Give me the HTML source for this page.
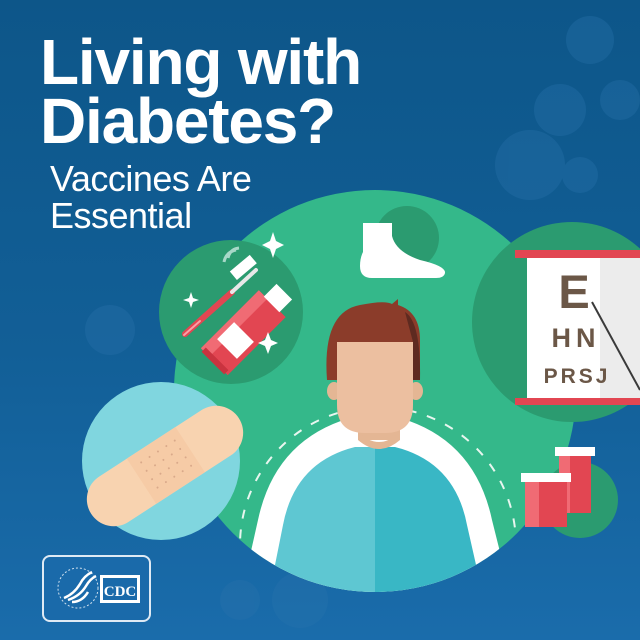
<!DOCTYPE html>
<html><head><meta charset="utf-8"><style>
html,body{margin:0;padding:0;width:640px;height:640px;overflow:hidden;}
body{position:relative;background:linear-gradient(180deg,#0d5689 0%,#125f97 55%,#1a6cab 100%);font-family:"Liberation Sans",sans-serif;}
.t1{position:absolute;left:40px;top:33px;color:#fff;font-weight:bold;font-size:64px;line-height:59px;letter-spacing:-1.2px;white-space:nowrap;}
.t2{position:absolute;left:50px;top:160px;color:#fff;font-size:36px;line-height:37px;letter-spacing:-0.5px;white-space:nowrap;}
svg{position:absolute;left:0;top:0;display:block;}
</style></head><body>
<svg width="640" height="640" viewBox="0 0 640 640">
  <g fill="#2a74ad" opacity="0.35">
    <circle cx="590" cy="40" r="24"/><circle cx="560" cy="110" r="26"/><circle cx="530" cy="165" r="35"/>
    <circle cx="620" cy="100" r="20"/><circle cx="580" cy="175" r="18"/>
    <circle cx="110" cy="330" r="25"/><circle cx="300" cy="600" r="28"/><circle cx="240" cy="600" r="20"/>
  </g>
  <circle cx="375" cy="391" r="201" fill="#34b88a"/>
  <!-- foot -->
  <circle cx="407" cy="238" r="32" fill="#2b9b70"/>
  <path d="M363 223 H392 V236 Q396 252 420 260 Q446 266 445 273 Q444 278 436 278 H372 Q360 278 360 266 Q360 258 363 252 Z" fill="#fff"/>
  <!-- toothpaste circle -->
  <circle cx="231" cy="312" r="72" fill="#2b9b70"/>
  <path d="M185 334 L232 292" stroke="#e24652" stroke-width="6" stroke-linecap="round"/>
  <path d="M184 335 L200 321" stroke="#f8a0a6" stroke-width="2" stroke-linecap="round"/>
  <path d="M232 292 L256 270" stroke="#e8e8e8" stroke-width="4" stroke-linecap="round"/>
  <rect x="230" y="262" width="26" height="11" fill="#fff" transform="rotate(-40 243 267)"/>
  <path d="M224 262 q2-10 12-12 M228 258 q2-9 11-10" stroke="#a7d8c8" stroke-width="3" fill="none"/>
  <g transform="rotate(45 244 332)">
    <rect x="225" y="292" width="38" height="82" fill="#e24652"/>
    <rect x="225" y="292" width="12" height="82" fill="#f06b74"/>
    <rect x="228" y="370" width="32" height="6" fill="#c9333f"/>
    <rect x="233" y="275" width="22" height="18" fill="#fff"/>
    <rect x="230" y="332" width="28" height="24" fill="#fff"/>
  </g>
  <path d="M273 232 l3 9 8 4 -8 4 -3 9 -3-9 -8-4 8-4z" fill="#fff"/>
  <path d="M191 292 l2 6 6 2 -6 2 -2 6 -2-6 -6-2 6-2z" fill="#fff"/>
  <path d="M268 332 l3 8 7 3 -7 3 -3 8 -3-8 -7-3 7-3z" fill="#fff"/>
  <!-- bandaid -->
  <circle cx="161" cy="461" r="79" fill="#80d6df"/>
  <g transform="rotate(-33 165 466)">
    <rect x="77" y="439" width="176" height="54" rx="27" fill="#f8d3b0"/>
    <rect x="137" y="439" width="58" height="54" fill="#f6cba6"/>
    <g fill="#d9a98a">
      <circle cx="147" cy="450" r="1"/><circle cx="157" cy="450" r="1"/><circle cx="167" cy="450" r="1"/><circle cx="177" cy="450" r="1"/><circle cx="187" cy="450" r="1"/>
      <circle cx="147" cy="460" r="1"/><circle cx="157" cy="460" r="1"/><circle cx="167" cy="460" r="1"/><circle cx="177" cy="460" r="1"/><circle cx="187" cy="460" r="1"/>
      <circle cx="147" cy="470" r="1"/><circle cx="157" cy="470" r="1"/><circle cx="167" cy="470" r="1"/><circle cx="177" cy="470" r="1"/><circle cx="187" cy="470" r="1"/>
      <circle cx="147" cy="480" r="1"/><circle cx="157" cy="480" r="1"/><circle cx="167" cy="480" r="1"/><circle cx="177" cy="480" r="1"/><circle cx="187" cy="480" r="1"/>
    </g>
  </g>
  <!-- eye chart -->
  <circle cx="572" cy="322" r="100" fill="#2b9b70"/>
  <rect x="527" y="258" width="113" height="140" fill="#fff"/>
  <rect x="600" y="258" width="40" height="140" fill="#ececec"/>
  <rect x="515" y="250" width="125" height="8" fill="#e24652"/>
  <rect x="515" y="398" width="125" height="7" fill="#e24652"/>
  <text x="574" y="308" font-family="Liberation Sans" font-weight="bold" font-size="47" fill="#6b5747" text-anchor="middle">E</text>
  <text x="576" y="347" font-family="Liberation Sans" font-weight="bold" font-size="27" fill="#6b5747" text-anchor="middle" letter-spacing="5">HN</text>
  <text x="577" y="383" font-family="Liberation Sans" font-weight="bold" font-size="21" fill="#6b5747" text-anchor="middle" letter-spacing="3">PRSJ</text>
  <path d="M592 302 L640 390" stroke="#3a3a3a" stroke-width="2"/>
  <!-- pills -->
  <circle cx="580" cy="500" r="38" fill="#2b9b70"/>
  <rect x="559" y="454" width="32" height="59" fill="#e24652"/><rect x="559" y="454" width="11" height="59" fill="#f06b74"/>
  <rect x="555" y="447" width="40" height="9" fill="#fff"/>
  <rect x="525" y="480" width="42" height="47" fill="#e24652"/><rect x="525" y="480" width="14" height="47" fill="#f06b74"/>
  <rect x="521" y="473" width="50" height="9" fill="#fff"/>
  <!-- person -->
  <clipPath id="cc"><circle cx="375" cy="391" r="201"/></clipPath>
  <g clip-path="url(#cc)">
    <circle cx="378" cy="545" r="138" fill="none" stroke="#e8f6ef" stroke-width="2" stroke-dasharray="9 11"/>
    <path d="M240 600 L258 520 Q275 440 350 418 L400 418 Q475 440 492 520 L512 600 Z" fill="#fff"/>
    <path d="M268 600 L283 525 Q295 462 355 447 L375 447 L375 600 Z" fill="#5ec7d2"/>
    <path d="M375 447 L395 447 Q455 462 467 525 L484 600 L375 600 Z" fill="#39b7c5"/>
    <rect x="358" y="400" width="42" height="40" fill="#e4b694"/>
    <path d="M358 432 Q379 452 400 432 V440 Q379 458 358 440Z" fill="#e4b694"/>
  </g>
  <ellipse cx="334" cy="391" rx="7" ry="9" fill="#e4b694"/>
  <ellipse cx="416" cy="391" rx="7" ry="9" fill="#e4b694"/>
  <path d="M337 342 H413 V405 Q413 433 385 433 H365 Q337 433 337 405 Z" fill="#ecbfa0"/>
  <path d="M327 380 Q322 312 360 305 Q385 300 392 304 L398 299 L398 305 Q420 312 420 340 L420 380 L413 380 L413 342 L337 342 L337 380 Z" fill="#8b3c2a"/>
  <path d="M405 312 Q421 322 420 380 L413 380 L413 342 Z" fill="#5e2a20"/>
  <!-- CDC logo -->
  <rect x="43" y="556" width="107" height="65" rx="7" fill="#1a6aaa" stroke="#dfeaf4" stroke-width="2"/>
  <circle cx="78" cy="588" r="20" fill="none" stroke="#cfe0ee" stroke-width="1" stroke-dasharray="2 2"/>
  <path d="M64 598 q10-4 16-14 q4-8 12-12 M68 600 q12-4 18-14 q4-7 10-10 M72 602 q10 0 16-10" stroke="#fff" stroke-width="2.5" fill="none"/>
  <rect x="100" y="575" width="40" height="28" fill="#fff"/>
  <rect x="103" y="578" width="34" height="22" fill="#1a6aaa"/>
  <text x="120" y="596" font-family="Liberation Serif" font-weight="bold" font-size="15" fill="#fff" text-anchor="middle">CDC</text>
</svg>
<div class="t1">Living with<br>Diabetes?</div>
<div class="t2">Vaccines Are<br>Essential</div>
</body></html>
